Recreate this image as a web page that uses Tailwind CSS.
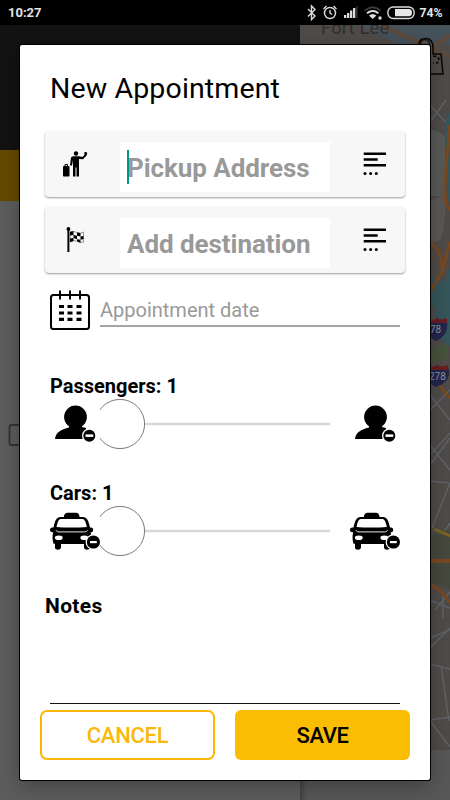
<!DOCTYPE html>
<html lang="en">
<head>
<meta charset="utf-8">
<title>New Appointment</title>
<script src="https://cdn.jsdelivr.net/npm/@tailwindcss/browser@4"></script>
</head>
<body class="bg-black">
<svg class="hidden">
  <defs>
    <symbol id="person" viewBox="0 0 50 50">
      <circle cx="25.500" cy="18" r="11.400"/>
      <path d="M19 25v3.500C11 30.500 6 33 5 40h31V29l-4-1v-3z"/>
      <circle cx="39.300" cy="36.700" r="7.300" fill="#fff"/>
      <circle cx="39.300" cy="36.700" r="6"/>
      <rect x="35.500" y="35.400" width="7.800" height="2.500" fill="#fff"/>
    </symbol>
    <symbol id="taxi" viewBox="0 0 50 50">
      <path d="M14 11c0-3.500 2-4.300 4-4.300h7.500c2 0 4 .8 4 4.300H33c4 0 5.500 3.500 7 10.500 2 0 3.200.6 3.200 2.500s-1 2.200-2.600 2.300c1 3 .9 6 .7 9.700v4l-1.200 1.500c-.3 3-6.100 3-6.100-.3V38H11v3.200c0 3.300-6 3.300-6 .3v-3.700H3.500c-1.200-3.800-1.300-8-.3-11.500C1.500 26.200 0 26 0 24s1.300-2.500 3.500-2.500C5 14.500 6.500 11 10.500 11z"/>
      <path d="M11.500 12.900h20.500c2.600 0 3.600 2.300 4.800 8.100-8 .8-22.300.8-30.300 0 1.200-5.800 2-8.100 5-8.100z" fill="#fff"/>
      <path d="M6 24.200c.5 1.200 1.500 1.700 3 1.700h25.500c1.500 0 2.500-.5 3-1.700" fill="none" stroke="#fff" stroke-width=".9"/>
      <ellipse cx="8.800" cy="31.800" rx="3.900" ry="2.300" fill="#fff"/>
      <ellipse cx="34.300" cy="31.800" rx="3.900" ry="2.300" fill="#fff"/>
      <circle cx="43.400" cy="36" r="7.800" fill="#fff"/>
      <circle cx="43.400" cy="36" r="6.600"/>
      <rect x="40" y="35" width="6.800" height="2.200" fill="#fff"/>
    </symbol>
    <symbol id="lines" viewBox="0 0 24 24">
      <path d="M.7 1.800h22.300M.7 7.500h14M.7 13.200h22.300" stroke="#000" stroke-width="2.500"/>
      <circle cx="2" cy="21.500" r="1.500"/><circle cx="7.600" cy="21.500" r="1.500"/><circle cx="13.300" cy="21.500" r="1.500"/>
    </symbol>
  </defs>
</svg>
<div class="relative w-[450px] h-[800px] overflow-hidden font-['Roboto','Liberation_Sans',sans-serif] text-black">
  <svg class="absolute inset-0" width="450" height="800" viewBox="0 0 450 800">
    <defs>
      <linearGradient id="edge"><stop offset="0" stop-color="#000" stop-opacity=".24"/><stop offset="1" stop-color="#000" stop-opacity="0"/></linearGradient>
    </defs>
    <rect width="450" height="800" fill="#5c5c5c"/>
    <rect y="25" width="300" height="125" fill="#121212"/>
    <rect y="150" width="300" height="51" fill="#654900"/>
    <rect x="9.500" y="425" width="20" height="20" rx="2" fill="none" stroke="#333" stroke-width="1.800"/>
    <rect x="300" y="25" width="150" height="725" fill="#4e4b48"/>
    <rect x="300" y="750" width="150" height="50" fill="#575757"/>
    <path d="M359 25l41 20h50V25z" fill="#46525a"/>
    <path d="M380 25l50 22 20 10M450 35l-25 18" fill="none" stroke="#5b4a3e" stroke-width="5"/>
    <text x="321" y="34" font-size="18.500" letter-spacing=".1" fill="#303030">Fort Lee</text>
    <g fill="none" stroke="#5f6268" stroke-width="1.500">
      <path d="M430 105l20 22M430 122l16-22M430 445l20 25M450 438l-20 27M430 481l20 2M432 528l18-45M430 455l20-22M431 567l10-30 9-14M430 638l20-8M430 648l20-20M430 664l20 5M431 720l19-3M441 666l8 55M431 722l19 25M430 410l20-20M430 395l20 25M435 610l15-18M443 592v26M430 600l20 8"/>
    </g>
    <path d="M431 537q8-8 19-6v58l-19-7z" fill="#45483d"/>
    <path d="M446 120l4-8v90l-7-9zM430 278l14 4-5 20-9 5zM434 300l10-18 6-14v78l-12-8z" fill="#35565a"/>
    <path d="M432 350l14-8 2 15-17 6z" fill="#46543b"/>
    <path d="M431 130q10 0 14 8v58h-14z" fill="#595957"/>
    <path d="M431 200l15-5q-1 35-6 46l-9 2z" fill="#5b5754"/>
    <g fill="none" stroke="#7a4820" stroke-width="3">
      <path d="M450 125q-5 50-5 65t5 20M430 243q12 5 12 29l-12 20M442 272l8-30M438 384l12 14M430 585q10 3 20 18"/>
      <path d="M430 561h20" stroke-width="4"/>
      <path d="M434 529l16 7" stroke="#7d6424"/>
    </g>
    <g id="shields">
      <path d="M427 322q10-4 20-1 2 14-11 20-10-4-9-19z" fill="#22264b"/>
      <path d="M428 323v-4q8 2 9-2 2 4 10 1v5z" fill="#681d22"/>
      <text x="430" y="333" font-size="10" fill="#9092a0">78</text>
      <path d="M427 369h22q2 13-13 18-10-4-9-18z" fill="#22264b"/>
      <path d="M428 370v-4q8 2 9-2 2 4 11 1v5z" fill="#681d22"/>
      <text x="429" y="380" font-size="10" fill="#9092a0">278</text>
    </g>
    <g fill="none" stroke="#080808" stroke-width="1.500">
      <path d="M419 46q-1-7.500 7-7.500 7 0 7 9.500v6h8l2 20h-14"/>
      <circle cx="425" cy="44" r="4.500" stroke="#24110c"/>
      <path d="M433 56q6 0 6 4t-6 3" stroke-dasharray="3 2"/>
    </g>
    <rect x="300" y="780" width="7" height="20" fill="url(#edge)"/>
  </svg>

  <header class="absolute inset-x-0 top-0 flex h-[25px] items-center bg-black pl-[8px] text-[#e4e4e4]">
    <span class="w-[297px] text-[13px] leading-none font-bold">10:27</span>
    <svg width="145" height="25" viewBox="305 0 145 25" fill="none" stroke="#ddd" stroke-width="1.400">
      <path d="M308 9l7 7-3.500 3.500V6l3.500 3.500-7 7"/>
      <circle cx="330" cy="13" r="5.500"/><path d="M330 10v3l2 1.500M323.500 9l3-3M336.500 9l-3-3"/>
      <g stroke="none" fill="#ddd">
        <path d="M344 15h2.300v3H344zM347 13h2.300v5H347zM350 10.500h2.300v7.500H350zM353 8h2.300v10H353z"/>
        <path d="M356 6h1.500v12H356z" fill="#333"/>
        <path d="M369 15.500q3.700-3 7.400 0L372.700 19z"/>
        <circle cx="380" cy="18" r="1.700"/>
      </g>
      <path d="M365 10.500q7.700-6.500 15.400 0" stroke="#3a3a3a" stroke-width="2"/>
      <path d="M367 13.200q5.700-4.500 11.400 0" stroke="#ddd" stroke-width="1.800"/>
      <rect x="387.800" y="7" width="26.400" height="11.500" rx="5.500"/>
      <path d="M395 9h14q3 0 3 3.500t-3 3.700h-14z" fill="#e7e7e7" stroke="none"/>
      <text x="419.500" y="17.300" font-size="12.500" font-weight="700" fill="#e4e4e4" stroke="none" textLength="23" lengthAdjust="spacingAndGlyphs">74%</text>
    </svg>
  </header>

  <main class="absolute left-[20px] top-[45px] flex h-[735px] w-[410px] flex-col rounded-[2px] bg-white shadow-[0_0_0_1px_#000,0_5px_20px_rgba(0,0,0,.3)]">
    <h1 class="mt-[26px] ml-[30px] h-[36px] text-[28.5px] leading-[36px] tracking-[.14px]">New Appointment</h1>

    <section class="mt-[24px] ml-[25px] flex w-[360px] flex-col gap-[10px]">
      <div class="flex h-[66px] items-start rounded-[4px] bg-[#f7f7f7] shadow-[0_1px_2px_rgba(0,0,0,.4)]">
        <svg class="mt-[20px] ml-[18px]" width="26" height="26" viewBox="0 0 26 26">
          <rect x="0" y="15" width="6.500" height="10.500" rx=".8"/><path d="M2 15v-1.500h2.500V15" fill="none" stroke="#000"/>
          <circle cx="13" cy="2.500" r="2.200"/>
          <path d="M8 6.500q1-1.300 3-1.300h5l3.500.8 2-2.200-.3-2L22.500.8l1.700 1-.4 2.500-3.800 4-4-.3v17.500h-2.500v-9h-1v9H10V9l-1 5.500H7z"/>
        </svg>
        <div class="relative mt-[11px] ml-[31px] flex h-[50px] w-[210px] items-center bg-white pl-[7px] text-[26px] font-bold text-[#999]">
          <span class="absolute left-[7px] top-[8px] h-[34px] w-[2px] bg-[#009688]"></span>
          <span class="leading-[34px] tracking-[-.06px] whitespace-nowrap pt-[2px]">Pickup Address</span>
        </div>
        <svg class="mt-[21px] ml-[33px]" width="24" height="24"><use href="#lines"/></svg>
      </div>
      <div class="flex h-[66px] items-start rounded-[4px] bg-[#f7f7f7] shadow-[0_1px_2px_rgba(0,0,0,.4)]">
        <svg class="mt-[20px] ml-[18px]" width="26" height="26" viewBox="0 0 26 26">
          <circle cx="5.400" cy="2" r="1.900"/><path d="M5.400 2v23" stroke="#000" stroke-width="2"/>
          <path d="M7 5q4-1.500 7 .5t6.500-.5v10q-4 1.500-7-.8T7 15z" fill="#f7f7f7" stroke="#555" stroke-width=".6"/>
          <path d="M7 5q2-1 3.500-.5v3.500L7 8.500zM14 5.500l3.500.5v3.500l-3.500-.8zM10.500 8l3.500.7v3.600L10.500 11zM17.500 9.500l3-.6v3.200l-3 .7zM7 11.500l3.500-.5v3.300L7 15zM14 12.300l3.500.5v3l-3.500-1.500z"/>
        </svg>
        <div class="mt-[11px] ml-[31px] flex h-[50px] w-[210px] items-center bg-white pl-[7px] text-[26px] font-bold text-[#999]">
          <span class="leading-[34px] tracking-[-.06px] whitespace-nowrap pt-[2px]">Add destination</span>
        </div>
        <svg class="mt-[21px] ml-[33px]" width="24" height="24"><use href="#lines"/></svg>
      </div>
    </section>

    <div class="mt-[17px] ml-[30px] flex h-[40px] gap-[10px]">
      <svg width="40" height="40" viewBox="0 0 40 40" fill="none" stroke="#000" stroke-width="2">
        <rect x="1" y="5" width="38" height="34" rx="2.500"/>
        <path d="M10 .5v9M20 .5v9M30 .5v9"/>
        <path d="M9 16.500h5M17.500 16.500h5M26.500 16.500h5M9 23h5M17.500 23h5M26.500 23h5M9 29.300h5M17.500 29.300h5M26.500 29.300h5" stroke-width="3.200"/>
      </svg>
      <div class="h-[37px] w-[300px] border-b-2 border-[#a5a5a5] text-[20px] leading-[41px] text-[#999]">Appointment date</div>
    </div>

    <section class="mt-[43px] ml-[30px]">
      <h2 class="h-[26px] text-[20px] leading-[26px] font-bold">Passengers: 1</h2>
      <div class="flex h-[50px]">
        <svg class="shrink-0" width="50" height="50"><use href="#person"/></svg>
        <svg class="shrink-0" width="230" height="50" viewBox="50 0 230 50"><path d="M95 25h185" stroke="#d8d8d8" stroke-width="2.500"/><circle cx="70" cy="25" r="24.600" fill="#fff" stroke="#555" stroke-width=".8"/></svg>
        <svg class="ml-[20px] shrink-0" width="50" height="50"><use href="#person"/></svg>
      </div>
    </section>

    <section class="mt-[31px] ml-[30px]">
      <h2 class="h-[26px] text-[20px] leading-[26px] font-bold">Cars: 1</h2>
      <div class="flex h-[50px]">
        <svg class="shrink-0" width="50" height="50"><use href="#taxi"/></svg>
        <svg class="shrink-0" width="230" height="50" viewBox="50 0 230 50"><path d="M95 25h185" stroke="#d8d8d8" stroke-width="2.500"/><circle cx="70" cy="25" r="24.600" fill="#fff" stroke="#555" stroke-width=".8"/></svg>
        <svg class="ml-[20px] shrink-0" width="50" height="50"><use href="#taxi"/></svg>
      </div>
    </section>

    <h2 class="mt-[37px] ml-[25px] h-[26px] text-[21px] leading-[27px] font-bold tracking-[.35px]">Notes</h2>
    <div class="ml-[30px] h-[85px] w-[350px] border-b border-[#111]"></div>
    <footer class="mt-[6px] ml-[20px] flex h-[50px] gap-[20px] text-[22px] leading-[48px]">
      <button class="flex w-[175px] items-center justify-center rounded-[7px] border-2 border-[#fdb506] pt-[2px] font-medium tracking-[-.3px] text-[#fbb80a]">CANCEL</button>
      <button class="flex w-[175px] items-center justify-center rounded-[6px] bg-[#fbbc04] pt-[2px] font-medium tracking-[-.4px]">SAVE</button>
    </footer>
  </main>
</div>
</body>
</html>
